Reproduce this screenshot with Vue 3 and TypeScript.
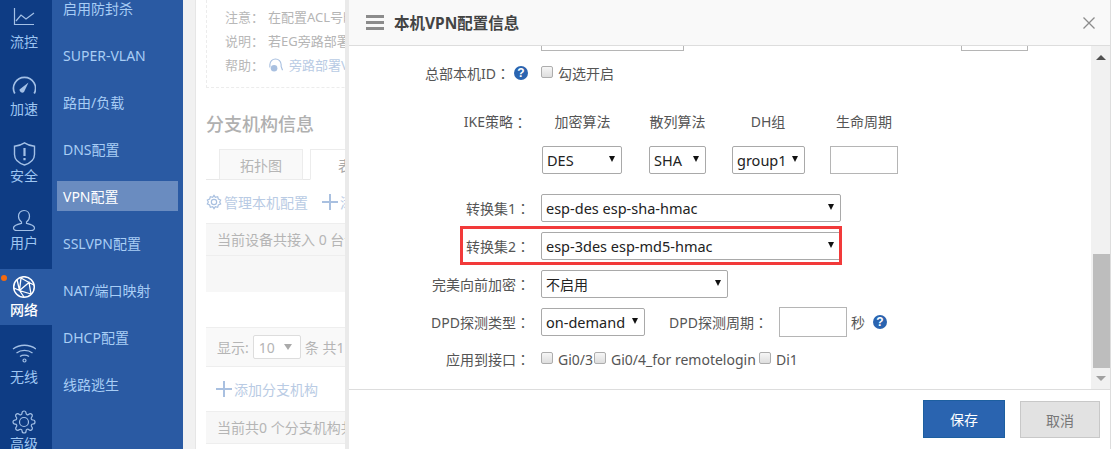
<script setup lang="ts">
const rail = [
  { key: 'flow', label: '流控' },
  { key: 'speed', label: '加速' },
  { key: 'safe', label: '安全' },
  { key: 'user', label: '用户' },
  { key: 'net', label: '网络', active: true },
  { key: 'wifi', label: '无线' },
  { key: 'adv', label: '高级' },
]
const subnav = ['启用防封杀', 'SUPER-VLAN', '路由/负载', 'DNS配置', 'VPN配置', 'SSLVPN配置', 'NAT/端口映射', 'DHCP配置', '线路逃生']
</script>

<template>
  <div class="app">
    <aside class="rail">
      <div v-for="r in rail" :key="r.key" class="rail-item" :class="{ on: r.active }">
        <i v-if="r.active" class="dot"></i>
        <svg class="rail-ico" viewBox="0 0 24 24" fill="none" stroke="currentColor" stroke-width="1.2">
          <template v-if="r.key === 'flow'">
            <path d="M2.500 0v16.500H22" />
            <path d="M4 13l5-6 5 4 8-6" />
          </template>
          <template v-else-if="r.key === 'speed'">
            <path d="M2.800 18.500A11 11 0 1 1 22.200 18.500" stroke-width="1.700" />
            <path d="M7.500 14.500L16.500 7.500 12 17a2.800 2.800 0 0 1-4.500-2.500z" fill="currentColor" stroke="none" />
          </template>
          <template v-else-if="r.key === 'safe'">
            <path d="M12.500.8c3 2 6 3 10 3.400v8.300c0 5-4 8.500-10 10.500-6-2-10-5.500-10-10.500V4.200c4-.4 7-1.400 10-3.400z" stroke-width="1.400" />
            <path d="M12.500 6v8M12.500 16v2.200" stroke-width="2.200" />
          </template>
          <template v-else-if="r.key === 'user'">
            <path d="M12 1.500c3.300 0 5.500 2.600 5.500 5.800 0 2.600-1.300 4.500-3 5.600v1.500c3.500.8 8 1.800 8 4.600 0 2-2 2.500-3.500 2.500H5c-1.500 0-3.500-.5-3.500-2.500 0-2.800 4.500-3.800 8-4.600v-1.500c-1.700-1.100-3-3-3-5.600 0-3.200 2.200-5.800 5.500-5.800z" />
          </template>
          <template v-else-if="r.key === 'net'">
            <circle cx="12" cy="11" r="10.300" stroke-width="1.500" />
            <path d="M5 3.500l2.500 11 11.500 3.500M9 2l-1.500 12.500M7.500 14.500L17 6.500l2 11.500M17 6.500L9 2M17 6.500l5 2.500M2 12l5.500 2.500M7.500 14.500L12 21" stroke-width="1.300" />
          </template>
          <template v-else-if="r.key === 'wifi'">
            <path d="M1 6c6.500-5 16.500-5 23 0M4.500 10c4.500-3.500 11.500-3.500 16 0M8 13.500c2.500-1.800 6.500-1.800 9 0" stroke-width="1.300" />
            <circle cx="12.500" cy="17.500" r="1.500" />
          </template>
          <template v-else>
            <circle cx="12" cy="12" r="4.500" />
            <path d="M19.400 15a1.650 1.650 0 0 0 .33 1.820l.06.06a2 2 0 0 1 0 2.830 2 2 0 0 1-2.830 0l-.06-.06a1.650 1.650 0 0 0-1.820-.33 1.650 1.650 0 0 0-1 1.510V21a2 2 0 0 1-2 2 2 2 0 0 1-2-2v-.09A1.650 1.650 0 0 0 9 19.400a1.650 1.650 0 0 0-1.820.33l-.06.06a2 2 0 0 1-2.830 0 2 2 0 0 1 0-2.830l.06-.06a1.650 1.650 0 0 0 .33-1.820 1.650 1.650 0 0 0-1.510-1H3a2 2 0 0 1-2-2 2 2 0 0 1 2-2h.09A1.650 1.650 0 0 0 4.600 9a1.650 1.650 0 0 0-.33-1.820l-.06-.06a2 2 0 0 1 0-2.830 2 2 0 0 1 2.830 0l.06.06a1.650 1.650 0 0 0 1.820.33H9a1.650 1.650 0 0 0 1-1.510V3a2 2 0 0 1 2-2 2 2 0 0 1 2 2v.09a1.650 1.650 0 0 0 1 1.510 1.650 1.650 0 0 0 1.820-.33l.06-.06a2 2 0 0 1 2.830 0 2 2 0 0 1 0 2.830l-.06.06a1.650 1.650 0 0 0-.33 1.820V9a1.650 1.650 0 0 0 1.510 1H21a2 2 0 0 1 2 2 2 2 0 0 1-2 2h-.09a1.650 1.650 0 0 0-1.510 1z" />
          </template>
        </svg>
        <span>{{ r.label }}</span>
      </div>
    </aside>

    <nav class="subnav">
      <a v-for="s in subnav" :key="s" :class="{ on: s === 'VPN配置' }">{{ s }}</a>
    </nav>

    <main class="page">
      <div class="panel">
        <div class="notes">
          <div class="note"><b>注意：</b><span>在配置ACL号时，请注意</span></div>
          <div class="note"><b>说明：</b><span>若EG旁路部署，请先配置</span></div>
          <div class="note"><b>帮助：</b>
            <svg class="head" viewBox="0 0 16 16" fill="none" stroke="#a9c0e0" stroke-width="1.200">
              <path d="M2 10V7a6 6 0 0 1 12 0v2l1.500 4" />
              <circle cx="6.500" cy="11" r="3.500" fill="#a9c0e0" stroke="none" />
            </svg>
            <span class="link">旁路部署VPN配置</span>
          </div>
        </div>
        <h3>分支机构信息</h3>
        <div class="tabs"><span class="tab">拓扑图</span><span class="tab cur">表格</span></div>
        <div class="tools">
          <svg class="gear" viewBox="0 0 24 24" fill="none" stroke="#a9c0e0" stroke-width="1.800">
            <circle cx="12" cy="12" r="4" />
            <path d="M12 2l2 3 3.500-1 1 3.500L22 9l-1.500 3 1.500 3-3.500 1.500-1 3.500-3.500-1-2 3-2-3-3.500 1-1-3.500L2 15l1.500-3L2 9l3.500-1.500 1-3.500L10 5z" />
          </svg>
          <span>管理本机配置</span>
          <span class="plus"></span>
          <span>添加本机配置</span>
        </div>
        <div class="table">
          <div class="t-head">当前设备共接入 0 台设备</div>
          <div class="t-row grey"></div>
          <div class="t-row"></div>
          <div class="t-foot">
            <span>显示:</span>
            <span class="pager">10<i></i></span>
            <span>条 共1页</span>
          </div>
        </div>
        <div class="add"><span class="plus"></span><span>添加分支机构</span></div>
        <div class="table second">
          <div class="t-head">当前共0 个分支机构共接入</div>
        </div>
      </div>
    </main>

    <section class="modal">
      <header class="m-head">
        <span class="burger"><i></i><i></i><i></i></span>
        <strong>本机VPN配置信息</strong>
        <svg class="close" viewBox="0 0 12 12" stroke="#8c8c8c" stroke-width="1.300"><path d="M.5.5l11 11M11.500.5l-11 11" /></svg>
      </header>
      <div class="m-body">
        <form class="form" @submit.prevent>
          <div class="stub"><span class="s1"></span><span class="s2"></span></div>

          <div class="row r-id">
            <label><span class="id-t">总部本机ID<span class="col">：</span></span><em class="q">?</em></label>
            <div class="ctl"><span class="chk"></span><span class="chk-t">勾选开启</span></div>
          </div>

          <div class="row r-ike">
            <label class="ike">IKE策略<span class="col">：</span></label>
            <div class="ike-grid">
              <span>加密算法</span><span>散列算法</span><span>DH组</span><span>生命周期</span>
              <span class="sel w80">DES</span>
              <span class="sel w57">SHA</span>
              <span class="sel w73">group1</span>
              <span class="ipt w68"></span>
            </div>
          </div>

          <div class="row r-t1">
            <label>转换集1<span class="col">：</span></label>
            <span class="sel w300">esp-des esp-sha-hmac</span>
          </div>

          <div class="row r-t2">
            <label>转换集2<span class="col">：</span></label>
            <span class="sel w300">esp-3des esp-md5-hmac</span>
            <i class="redbox"></i>
          </div>

          <div class="row r-pfs">
            <label>完美向前加密<span class="col">：</span></label>
            <span class="sel w187 cn">不启用</span>
          </div>

          <div class="row r-dpd">
            <label>DPD探测类型<span class="col">：</span></label>
            <span class="sel w104">on-demand</span>
            <span class="dpd-l">DPD探测周期<span class="col">：</span></span>
            <span class="ipt w68 tall"></span>
            <span class="sec">秒</span>
            <em class="q">?</em>
          </div>

          <div class="row r-if">
            <label>应用到接口<span class="col">：</span></label>
            <div class="ctl">
              <span class="chk"></span><span class="chk-t">Gi0/3</span>
              <span class="chk"></span><span class="chk-t">Gi0/4_for remotelogin</span>
              <span class="chk"></span><span class="chk-t">Di1</span>
            </div>
          </div>
        </form>
        <div class="scroll">
          <i class="up"></i>
          <div class="track"><div class="thumb"></div></div>
          <i class="down"></i>
        </div>
      </div>
      <footer class="m-foot">
        <button class="btn save" type="button">保存</button>
        <button class="btn cancel" type="button">取消</button>
      </footer>
    </section>
  </div>
</template>

<style>
html, body { margin: 0; overflow: hidden; }
</style>

<style scoped>
* { box-sizing: border-box; }
.app {
  position: relative;
  display: flex;
  width: 1113px;
  height: 449px;
  overflow: hidden;
  background: #f1f1f1;
  font: 14px "Noto Sans", "Noto Sans CJK SC", sans-serif;
  color: #333;
}

/* icon rail */
.rail {
  flex: 0 0 52px;
  display: flex;
  flex-direction: column;
  gap: 11px;
  padding-top: 1px;
  background: #0e3c84;
}
.rail-item {
  position: relative;
  flex: 0 0 56px;
  display: flex;
  flex-direction: column;
  align-items: center;
  padding: 7px 4px 0 0;
  color: #9ec6f2;
  line-height: 20px;
}
.rail-item.on {
  background: #2a5aa3;
  color: #fff;
  font-weight: 500;
}
.rail-ico { flex: none; width: 24px; height: 24px; color: #a3c0e6; }
.rail-item.on .rail-ico { color: #fff; }
.dot {
  position: absolute;
  left: 1px;
  top: 6px;
  width: 6px;
  height: 6px;
  border-radius: 50%;
  background: #f56a10;
}

/* sub navigation */
.subnav {
  flex: 0 0 131px;
  display: flex;
  flex-direction: column;
  gap: 17px;
  margin-top: -7px;
  padding: 0 5px;
  background: #2a5aa3;
  height: 460px;
}
.subnav a {
  flex: 0 0 30px;
  min-height: 0;
  padding-left: 6px;
  line-height: 32px;
  color: #a8cdf5;
}
.subnav a.on { background: #6a8cc0; color: #fff; }

/* page behind the dialog */
.page {
  flex: 1;
  min-width: 0;
  padding-left: 12px;
}
.panel {
  width: 100%;
  height: 100%;
  padding-left: 10px;
  background: #fff;
  border-left: 1px solid #e6e6e6;
  color: #b5b5b5;
  font-size: 13px;
  overflow: hidden;
  white-space: nowrap;
}
.notes {
  height: 88px;
  width: 500px;
  padding: 4px 0 0 18px;
  border: 1px dashed #ececec;
  border-top: 0;
}
.note { display: flex; align-items: center; height: 24px; }
.note b { width: 43px; font-weight: 400; color: #b8b8b8; }
.head { width: 15px; height: 15px; margin: 2px 6px 0 0; }
.link { color: #b9cbe4; }
h3 {
  margin: 24px 0 13px;
  font-size: 18px;
  line-height: 24px;
  font-weight: 500;
  color: #b0b0b0;
}
.tabs {
  display: flex;
  gap: 7px;
  height: 31px;
  width: 500px;
  padding-left: 13px;
  border-bottom: 1px solid #e8e8e8;
  font-size: 14px;
}
.tab {
  width: 84px;
  height: 31px;
  line-height: 31px;
  text-align: center;
  border: 1px solid #ececec;
  background: #f9f9f9;
}
.tab.cur { background: #fff; border-bottom-color: #fff; color: #aaa; }
.tools {
  display: flex;
  align-items: center;
  height: 43px;
  font-size: 14px;
  color: #b9cbe4;
}
.gear { width: 16px; height: 16px; margin-right: 2px; }
.plus {
  position: relative;
  flex: 0 0 16px;
  height: 16px;
  margin: 0 2px 0 14px;
  background:
    linear-gradient(#a9c0e0, #a9c0e0) center / 100% 2px no-repeat,
    linear-gradient(#a9c0e0, #a9c0e0) center / 2px 100% no-repeat;
}
.table { width: 500px; border-top: 1px solid #eee; }
.t-head {
  height: 32px;
  padding-left: 11px;
  line-height: 32px;
  background: #f7f7f7;
  border-bottom: 1px solid #eee;
  font-size: 14px;
}
.t-row { height: 36px; }
.t-row.grey { background: #f7f7f7; }
.t-row:not(.grey) { border-bottom: 1px solid #eee; }
.t-foot {
  display: flex;
  align-items: center;
  gap: 4px;
  height: 39px;
  padding: 0 0 1px 11px;
  background: #f9f9f9;
  border-bottom: 1px solid #eee;
  font-size: 14px;
}
.pager {
  position: relative;
  width: 48px;
  height: 24px;
  padding-left: 5px;
  line-height: 24px;
  font-size: 14px;
  background: #fff;
  border: 1px solid #ddd;
  border-radius: 2px;
}
.pager i {
  position: absolute;
  right: 8px;
  top: 8px;
  border: 4px solid transparent;
  border-top: 6px solid #aaa;
  border-bottom: 0;
}
.add {
  display: flex;
  align-items: center;
  height: 44px;
  font-size: 14px;
  color: #b9cbe4;
}
.add .plus { margin-left: 10px; }
.second { height: 33px; border-bottom: 1px solid #eee; background: #f7f7f7; }

/* dialog */
.modal {
  position: absolute;
  left: 349px;
  top: 0;
  width: 762px;
  height: 449px;
  display: flex;
  flex-direction: column;
  background: #fff;
  border-right: 1px solid #ddd;
  box-shadow: -4px 0 0 #eaeaea;
}
.m-head {
  flex: 0 0 46px;
  display: flex;
  align-items: center;
  padding: 0 15px 0 17px;
  background: #f9f9f9;
  border-bottom: 1px solid #ddd;
}
.burger { display: flex; flex-direction: column; gap: 3px; width: 18px; margin-right: 10px; }
.burger i { height: 3px; background: #8c8c8c; }
.m-head strong { font-size: 15.500px; font-weight: 700; color: #444; }
.close { width: 12px; height: 12px; margin-left: auto; }
.m-body {
  flex: 0 0 344px;
  display: flex;
  min-height: 0;
  overflow: hidden;
  border-bottom: 1px solid #ddd;
}
.form { flex: 0 0 742px; }
.stub { position: relative; display: flex; height: 5px; padding-left: 192px; }
.s1, .s2 {
  height: 5px;
  border: 1px solid #b5b5b5;
  border-top: 0;
}
.s1 { width: 143px; }
.s2 { width: 67px; margin-left: 277px; }
.row { position: relative; display: flex; align-items: center; }
.row > label {
  flex: 0 0 192px;
  display: flex;
  align-items: center;
  justify-content: flex-end;
  padding-right: 11px;
  color: #555;
  white-space: nowrap;
}
.col { font-family: "Noto Sans CJK TC", sans-serif; }
.r-id { margin-top: 9px; height: 26px; }
.r-id > label { padding-right: 13px; }
.id-t { margin-right: 4px; }
.r-ike { margin-top: 23px; align-items: flex-start; height: 96px; }
.r-ike > label { line-height: 26px; }
.r-ike > label.ike { padding-right: 14px; }
.ike-grid {
  display: grid;
  grid-template-columns: 81px 57px 72px 68px;
  grid-template-rows: 26px 28px;
  column-gap: 26px;
  row-gap: 11px;
  justify-items: center;
  align-items: center;
  margin-left: 1px;
  color: #555;
  line-height: 26px;
  white-space: nowrap;
}
.r-t1, .r-t2, .r-pfs, .r-dpd { height: 28px; }
.r-t1 { margin-top: -11px; }
.r-t2 { margin-top: 10px; }
.r-pfs { margin-top: 10px; }
.r-dpd { margin-top: 10px; }
.r-if { margin-top: 11px; height: 24px; }

.sel, .ipt {
  display: block;
  flex: none;
  height: 28px;
  border: 1px solid #a9a9a9;
  background: #fff;
  color: #222;
}
.sel {
  position: relative;
  padding-left: 4px;
  font-size: 14.500px;
  line-height: 27px;
  border-radius: 2px;
  white-space: nowrap;
}
.sel.cn { font-size: 14px; }
.sel::after {
  content: "";
  position: absolute;
  right: 6px;
  top: 9px;
  border: 3.500px solid transparent;
  border-top: 6px solid #111;
  border-bottom: 0;
}
.ipt { border-color: #b5b5b5; }
.w57 { width: 57px; }
.w68 { width: 68px; }
.w73 { width: 73px; }
.w80 { width: 80px; }
.w104 { width: 104px; }
.w187 { width: 187px; }
.w300 { width: 300px; }
.tall { height: 30px; }
.ike-grid .sel { justify-self: start; }
.redbox {
  position: absolute;
  left: 111px;
  top: -6px;
  width: 382px;
  height: 39px;
  border: 3px solid #f23a3a;
  pointer-events: none;
}
.dpd-l { margin-left: 24px; width: 110px; color: #555; white-space: nowrap; }
.sec { margin: 0 8px 0 4px; color: #555; }
.q {
  display: inline-block;
  flex: none;
  width: 14px;
  height: 14px;
  border-radius: 50%;
  background: #2a64b0;
  color: #fff;
  font: 700 12px/14px "Liberation Sans", sans-serif;
  text-align: center;
}
.ctl { display: flex; align-items: center; color: #555; white-space: nowrap; }
.chk {
  width: 12px;
  height: 12px;
  margin-top: -2px;
  border: 1px solid #adadad;
  border-radius: 2px;
  background: linear-gradient(#f6f6f6, #dedede);
}
.chk-t { margin: 0 0 0 5px; }
.r-if .chk-t:nth-child(2) { width: 36px; }
.r-if .chk-t:nth-child(4) { width: 148px; }

.scroll {
  flex: 0 0 19px;
  display: flex;
  flex-direction: column;
  align-items: center;
  background: #f1f1f1;
}
.up, .down {
  flex: none;
  width: 0;
  border: 5px solid transparent;
  margin: 0 auto;
}
.up { border-bottom: 5px solid #505050; border-top: 0; margin-top: 9px; }
.down { border-top: 5px solid #a0a0a0; border-bottom: 0; margin-bottom: 8px; }
.track { flex: 1; width: 100%; padding-top: 194px; padding-left: 2px; }
.thumb { height: 114px; background: #bdbdbd; }

.m-foot {
  flex: 1;
  display: flex;
  align-items: flex-start;
  justify-content: flex-end;
  gap: 15px;
  padding: 10px 10px 0 0;
}
.btn {
  height: 38px;
  font: 14px "Noto Sans", "Noto Sans CJK SC", sans-serif;
  padding: 0;
}
.save { width: 82px; background: #2a64b0; border: 1px solid #1d5fa0; color: #fff; }
.cancel { width: 80px; margin-top: 1px; height: 37px; background: #e2e2e2; border: 1px solid #c8c8c8; color: #777; }
</style>
